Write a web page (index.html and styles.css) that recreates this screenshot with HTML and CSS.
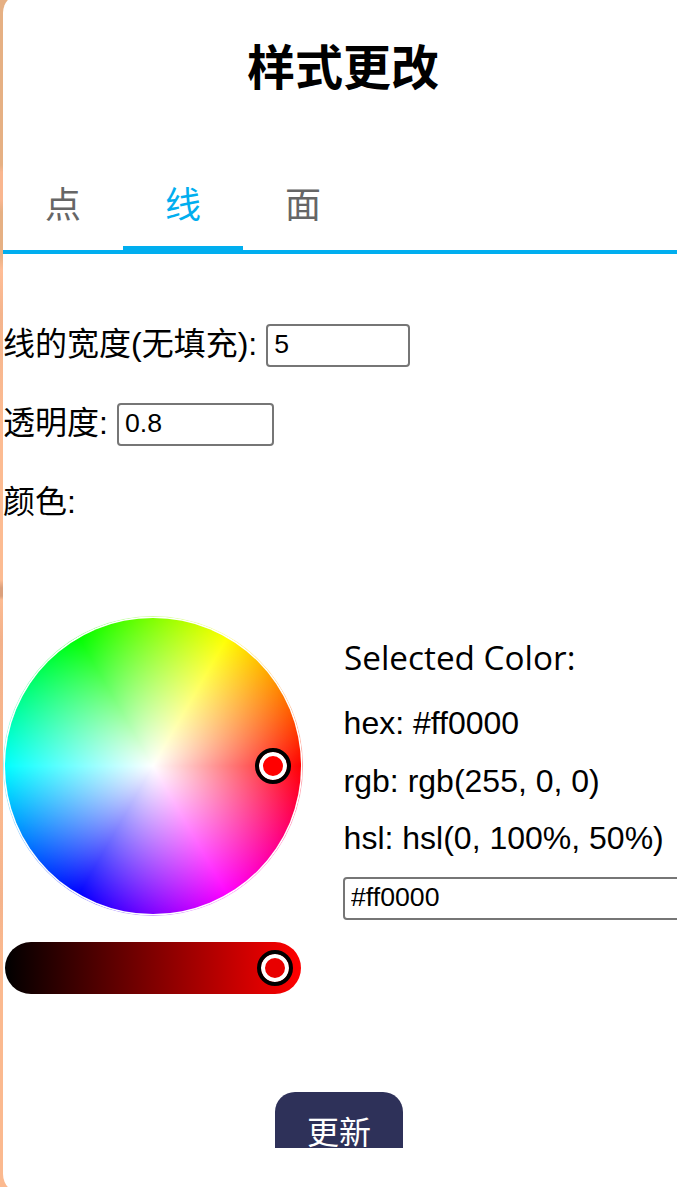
FILE: index.html
```html
<!DOCTYPE html>
<html lang="zh-CN">
<head>
<meta charset="utf-8">
<title>样式更改</title>
<link rel="stylesheet" href="styles.css">
</head>
<body>
<main class="panel">
  <h1 class="title">样式更改</h1>
  <nav class="tabs">
    <a class="tab">点</a>
    <a class="tab tab-active">线</a>
    <a class="tab">面</a>
  </nav>
  <section class="form">
    <label class="row"><span>线的宽度(无填充):</span><input class="field field-width" type="text" value="5"></label>
    <label class="row"><span>透明度:</span><input class="field field-opacity" type="text" value="0.8"></label>
    <div class="row"><span>颜色:</span></div>
  </section>
  <section class="color">
    <div class="picker">
      <div class="ring"><div class="wheel"><span class="handle"></span></div></div>
      <div class="slider"><span class="handle handle-value"></span></div>
    </div>
    <div class="readout">
      <div class="readout-title">Selected Color:</div>
      <div class="value">hex: #ff0000</div>
      <div class="value">rgb: rgb(255, 0, 0)</div>
      <div class="value">hsl: hsl(0, 100%, 50%)</div>
      <input class="field field-hex" type="text" value="#ff0000">
    </div>
  </section>
  <footer class="actions"><button class="update" type="button">更新</button></footer>
</main>
</body>
</html>
```

FILE: styles.css
```css
* { box-sizing: border-box; }

html { overflow: hidden; }

body {
  margin: 0;
  height: 1187px;
  overflow: hidden;
  background: linear-gradient(#e6b083 0, #e6b083 165px, #f9b68f 172px, #f9b68f 200px, #e6b083 212px, #e6b083 255px, #ffbd96 270px, #f4b48c 315px, #fcbb92 420px, #fcbb92 580px, #dba07c 588px, #dba07c 596px, #fcbb92 600px, #f3b18a 640px, #fbb98f 800px, #f5b38b 900px, #fbb98f 960px);
  font-family: "Liberation Sans", "Noto Sans CJK SC", sans-serif;
  font-size: 32px;
  color: #000;
}

.panel {
  width: 680px;
  height: 1201px;
  margin: -7px 0 0 3px;
  padding-top: 41px;
  border-radius: 20px;
  background: #fff;
}

.title {
  margin: 0;
  height: 70px;
  line-height: 70px;
  text-align: center;
  font-size: 48px;
  font-weight: 700;
}

.tabs {
  display: flex;
  height: 94px;
  margin-top: 56px;
  border-bottom: 4px solid #00aeef;
}

.tab {
  width: 120px;
  height: 90px;
  padding-top: 2px;
  line-height: 88px;
  border-bottom: 4px solid transparent;
  text-align: center;
  font-size: 36px;
  color: #666;
}

.tab-active {
  color: #00aeef;
  border-bottom-color: #00aeef;
}

.form {
  display: flex;
  flex-direction: column;
  gap: 36px;
  margin-top: 70px;
}

.row {
  display: flex;
  align-items: center;
  gap: 9px;
  height: 43px;
  line-height: 41px;
  white-space: nowrap;
}

.row span {
  height: 43px;
}

.field {
  height: 43px;
  margin: 0;
  padding: 0 6px 2px;
  border: 2px solid #767676;
  border-radius: 4px;
  background: #fff;
  font: 26.67px "Liberation Sans", sans-serif;
  color: #000;
  outline: none;
}

.field-width { width: 144px; }
.field-opacity { width: 157px; }

.color {
  display: flex;
  gap: 40px;
  margin-top: 91px;
}

.picker { width: 301px; }

.ring {
  --hues: conic-gradient(from 90deg, #f00, #f0f, #00f, #0ff, #0f0, #ff0, #f00);
  width: 300px;
  height: 300px;
  margin-left: 0;
  padding: 2px;
  border-radius: 50%;
  background:
    radial-gradient(closest-side, #fff 149px, rgba(255, 255, 255, 0.65) 149.5px),
    var(--hues);
}

.wheel {
  display: flex;
  align-items: center;
  justify-content: flex-end;
  width: 296px;
  height: 296px;
  padding-right: 10px;
  border-radius: 50%;
  background:
    radial-gradient(closest-side, #fff, transparent),
    var(--hues);
}

.slider {
  display: flex;
  align-items: center;
  justify-content: flex-end;
  width: 296px;
  height: 52px;
  margin: 26px 0 0 2px;
  padding-right: 8px;
  border-radius: 26px;
  background: linear-gradient(90deg, #000, #f00);
}

.handle {
  width: 36px;
  height: 36px;
  border: 4px solid #000;
  border-radius: 50%;
  background: #f00;
  box-shadow: inset 0 0 0 4px #fff;
}

.handle-value { background: #e80000; }

.readout {
  width: 360px;
  flex: none;
  padding-top: 14px;
}

.readout-title {
  height: 65px;
  padding-left: 1px;
  line-height: 54px;
  font-family: "Open Sans", "Noto Sans", sans-serif;
  font-size: 33.3px;
}

.value {
  height: 57.5px;
  padding-left: 0.6px;
  line-height: 57.5px;
  white-space: nowrap;
}

.field-hex {
  width: 360px;
  margin-top: 9px;
}

.actions {
  display: flex;
  justify-content: center;
  height: 56px;
  margin-top: 98px;
  margin-right: 8px;
  overflow: hidden;
}

.update {
  width: 128px;
  height: 80px;
  padding: 0 0 5px;
  border: 0;
  border-radius: 20px;
  background: #2e3159;
  font: 32px "Liberation Sans", "Noto Sans CJK SC", sans-serif;
  color: #fff;
}
```
